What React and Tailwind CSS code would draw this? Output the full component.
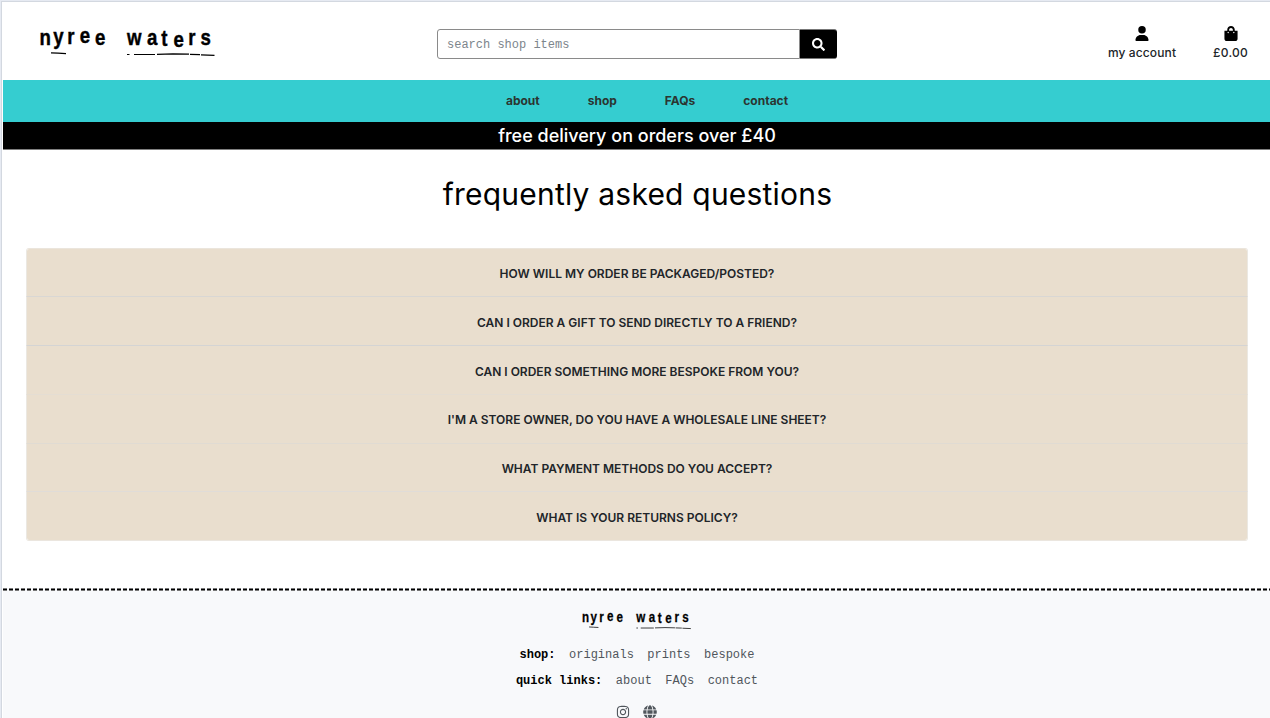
import React from "react";
import { FaSearch, FaShoppingBag, FaInstagram, FaGlobe } from "react-icons/fa";
import { FaUser } from "react-icons/fa6";

const LETTERS = [
  ["n", 39.5, 44.5],
  ["y", 53.2, 44.4],
  ["r", 67.2, 44.3],
  ["e", 79.7, 43],
  ["e", 94.9, 44.9],
  ["w", 126.9, 44.8],
  ["a", 147, 44.9],
  ["t", 161.3, 45.9],
  ["e", 173.4, 47],
  ["r", 188.3, 45.1],
  ["s", 200.6, 45.4],
];

function Logo({ className }) {
  return (
    <svg className={className} viewBox="38 16 180 48" role="img" aria-label="nyree waters">
      <g
        fill="#000"
        stroke="#000"
        strokeWidth="0.45"
        fontFamily="Liberation Sans, sans-serif"
        fontWeight="700"
        fontSize="23"
      >
        {LETTERS.map(([c, x, y], i) => (
          <text key={i} transform={`translate(${x} ${y}) scale(0.81 1)`}>{c}</text>
        ))}
      </g>
      <g stroke="#000" fill="none" strokeWidth="1.2">
        <path d="M51 52.8L58 53.2L66 53.6M127 54.5h2.5M134 54.5h21M157 54.3L173 53.8L189 54.2M190 54.3L200 54.6M201 54.8L214.5 55.4" />
      </g>
    </svg>
  );
}

const QUESTIONS = [
  ["How will my order be packaged/posted?", "h-12 pt-[2px] border-t-[#ebe5dc] rounded-t-[3px]"],
  ["Can I order a gift to send directly to a friend?", "h-[49px] pt-[4px] border-t-[#d9d7d4]"],
  ["Can I order something more bespoke from you?", "h-[49px] pt-[4px] border-t-[#d4d4d4]"],
  ["I'm a store owner, do you have a wholesale line sheet?", "h-[49px] pt-[2px] border-t-[#e4ddd3]"],
  ["What payment methods do you accept?", "h-[48px] pt-[3px] border-t-[#e0dbd3]"],
  ["What is your returns policy?", "h-[50px] pt-[3px] border-t-[#e0dcd8] border-b border-b-[#ebe6df] rounded-b-[3px]"],
];

export default function App() {
  return (
    <div className="h-[718px] overflow-hidden bg-[#e6eaf2] pl-px pt-px font-['Inter',sans-serif] text-black">
      <div className="flex h-full flex-col border-l border-t border-[#d3d8e0] bg-white pl-px">
        <header className="flex h-[78px] shrink-0">
          <div className="w-[434px] pl-[35px] pt-[14px]">
            <Logo className="h-12 w-[180px]" />
          </div>
          <form className="mt-[27px] flex h-[30px] w-[400px]">
            <input
              className="min-w-0 flex-1 rounded-l-[3px] border border-[#8a8a8a] bg-white px-[9px] pt-[2px] font-['Liberation_Mono',monospace] text-xs text-black placeholder:text-[#7d858c]"
              placeholder="search shop items"
            />
            <button type="button" className="flex w-[37px] items-center justify-center rounded-r-[3px] border-y border-[#777] bg-black text-white">
              <FaSearch className="size-[13px]" />
            </button>
          </form>
          <div className="ml-[271px] flex pt-6 text-xs leading-[18px] font-medium text-[#212529]">
            <a className="flex w-[68px] flex-col items-center whitespace-nowrap">
              <FaUser className="h-[15px] w-[14px] text-black" />
              <span className="mt-[3px] tracking-[0.12px]">my account</span>
            </a>
            <a className="ml-[37px] flex w-[35px] flex-col items-center whitespace-nowrap">
              <FaShoppingBag className="h-[15px] w-[14px] text-black" />
              <span className="mt-[3px] tracking-[0.23px]">£0.00</span>
            </a>
          </div>
        </header>
        <nav className="flex h-[42px] shrink-0 items-center justify-center gap-12 bg-[#35cdd0] pl-[21px] text-xs font-bold text-[#2b3531]">
          <a>about</a>
          <a>shop</a>
          <a>FAQs</a>
          <a>contact</a>
        </nav>
        <p className="flex h-7 shrink-0 items-center justify-center border-b border-[#7f7f7f] bg-black pl-px text-lg font-medium text-white">
          free delivery on orders over £40
        </p>
        <h1 className="mt-[20px] h-12 shrink-0 pl-[2px] text-center text-[30px] leading-[48px] tracking-[0.21px]">
          frequently asked questions
        </h1>
        <main className="mt-[30px] mr-[22px] ml-[23px] shrink-0">
          {QUESTIONS.map(([q, cls]) => (
            <h2
              key={q}
              className={`${cls} flex items-center justify-center border-x border-t border-x-[#ebe8e2] bg-[#e9dece] bg-clip-padding text-xs font-semibold text-[#212529] uppercase`}
            >
              {q}
            </h2>
          ))}
        </main>
        <footer className="mt-[47px] flex flex-1 flex-col items-center bg-[#f8f9fb] font-['Liberation_Mono',monospace] text-xs text-[#50565c]">
          <svg className="h-[3px] w-full shrink-0" aria-hidden="true">
            <path d="M0 1.5H1300" stroke="#777" strokeWidth="3" strokeDasharray="4 2" />
            <path d="M0 1.5H1300" stroke="#000" strokeWidth="1" strokeDasharray="4 2" />
          </svg>
          <Logo className="mt-[13px] h-[30px] w-[112px] shrink-0" />
          <div className="mt-3 ml-px flex h-[18px] items-center gap-[13.5px]">
            <b className="text-black">shop:</b>
            <a>originals</a>
            <a>prints</a>
            <a>bespoke</a>
          </div>
          <div className="mt-2 ml-px flex h-[18px] items-center gap-[13.5px]">
            <b className="text-black">quick links:</b>
            <a>about</a>
            <a>FAQs</a>
            <a>contact</a>
          </div>
          <div className="mt-[15px] flex gap-[13px]">
            <FaInstagram className="size-[14px]" />
            <FaGlobe className="size-[14px]" />
          </div>
        </footer>
      </div>
    </div>
  );
}
